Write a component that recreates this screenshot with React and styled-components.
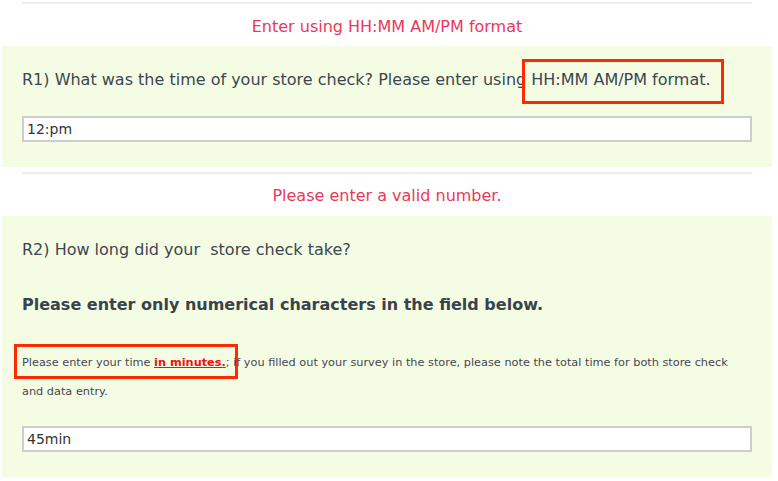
import React from 'react';
import styled, { createGlobalStyle } from 'styled-components';

const GlobalStyle = createGlobalStyle`
  body {
    margin: 0;
    background: #fff;
    font-family: "DejaVu Sans", Verdana, sans-serif;
    color: #3d4550;
  }
`;

const Page = styled.div`
  padding: 2px 6px 0 2px;
`;

const Divider = styled.div`
  height: 2px;
  background: #eeeeee;
  margin: ${p => p.$top || 0}px 20px 0;
`;

const ErrorText = styled.div`
  text-align: center;
  color: #e8395c;
  font-size: 16px;
  line-height: 20px;
  padding: ${p => p.$top}px 0 ${p => p.$bottom}px;
`;

const Panel = styled.div`
  background: #f4fde4;
  padding: ${p => p.$top}px 20px 25px;
`;

const Question = styled.p`
  margin: 0 0 ${p => p.$gap}px;
  font-size: 16px;
  line-height: 22px;
  color: #3d4550;
`;

// red annotation frame drawn around a run of inline text
const Hint = styled.span`
  padding: ${p => p.$pad.join('px ')}px;
  margin: 0 -${p => p.$pad[1] + 3}px 0 -${p => p.$pad[3] + 3}px;
  border: 3px solid #ff2a00;
`;

const Strong = styled.p`
  margin: 32px 0 0;
  font-size: 16px;
  font-weight: bold;
  line-height: 24px;
  color: #3a424c;
`;

const Note = styled.p`
  margin: 31px 0 20px;
  font-size: 11.3px;
  line-height: 29px;
  color: #4a4552;
`;

const Minutes = styled.a`
  color: #ee1111;
  font-weight: bold;
  text-decoration: underline;
`;

const TextInput = styled.input`
  display: block;
  box-sizing: border-box;
  width: 100%;
  height: 26px;
  margin: 0;
  padding: 0 3px;
  border: 2px solid #cdcdcd;
  background: #fff;
  font-family: "DejaVu Sans", Verdana, sans-serif;
  font-size: 14px;
  color: #333;
  outline: none;
`;

export default function App() {
  return (
    <Page>
      <GlobalStyle />
      <Divider />
      <ErrorText $top={13} $bottom={9}>Enter using HH:MM AM/PM format</ErrorText>
      <Panel $top={23}>
        <Question $gap={25}>
          R1) What was the time of your store check? Please enter using{' '}
          <Hint $pad={[8, 10, 12, 6]}>HH:MM AM/PM format.</Hint>
        </Question>
        <TextInput defaultValue="12:pm" />
      </Panel>
      <Divider $top={5} />
      <ErrorText $top={12} $bottom={10}>Please enter a valid number.</ErrorText>
      <Panel $top={23}>
        <Question $gap={0}>R2) How long did your &nbsp;store check take?</Question>
        <Strong>Please enter only numerical characters in the field below.</Strong>
        <Note>
          <Hint $pad={[9, 5, 7, 5]}>
            Please enter your time <Minutes href="#">in minutes.</Minutes>;
          </Hint>{' '}
          if you filled out your survey in the store, please note the total time for both store check and data entry.
        </Note>
        <TextInput defaultValue="45min" />
      </Panel>
    </Page>
  );
}
